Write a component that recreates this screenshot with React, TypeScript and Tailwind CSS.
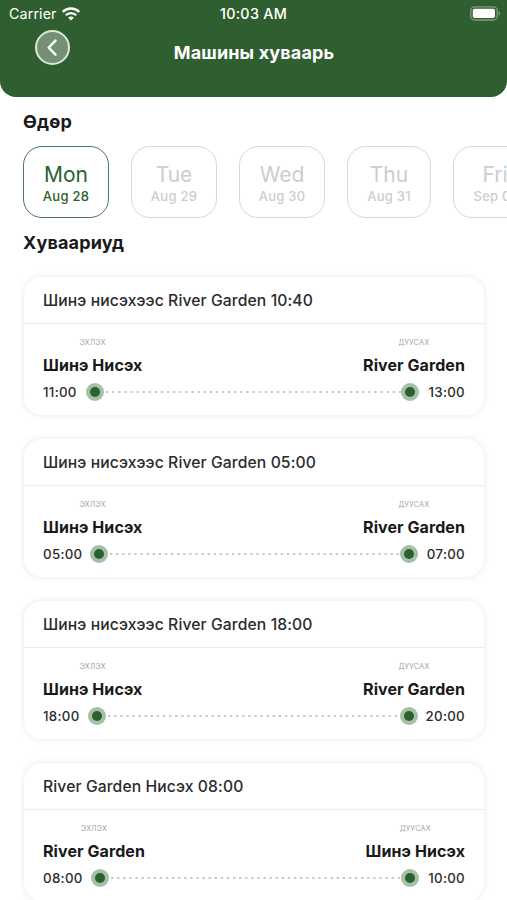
import React from 'react';
import clsx from 'clsx';

interface Day {
  name: string;
  date: string;
  width: string;
}

interface Trip {
  title: string;
  from: string;
  to: string;
  start: string;
  end: string;
  // text widths of the start/end times
  startWidth: string;
  endWidth: string;
}

const days: Day[] = [
  { name: 'Mon', date: 'Aug 28', width: 'w-[86px]' },
  { name: 'Tue', date: 'Aug 29', width: 'w-[86px]' },
  { name: 'Wed', date: 'Aug 30', width: 'w-[86px]' },
  { name: 'Thu', date: 'Aug 31', width: 'w-[84px]' },
  { name: 'Fri', date: 'Sep 01', width: 'w-[84px]' },
];

const trips: Trip[] = [
  { title: 'Шинэ нисэхээс River Garden 10:40', from: 'Шинэ Нисэх', to: 'River Garden', start: '11:00', end: '13:00', startWidth: 'w-[43px]', endWidth: 'w-[46px]' },
  { title: 'Шинэ нисэхээс River Garden 05:00', from: 'Шинэ Нисэх', to: 'River Garden', start: '05:00', end: '07:00', startWidth: 'w-[47px]', endWidth: 'w-[47px]' },
  { title: 'Шинэ нисэхээс River Garden 18:00', from: 'Шинэ Нисэх', to: 'River Garden', start: '18:00', end: '20:00', startWidth: 'w-[45px]', endWidth: 'w-[47px]' },
  { title: 'River Garden Нисэх 08:00', from: 'River Garden', to: 'Шинэ Нисэх', start: '08:00', end: '10:00', startWidth: 'w-[48px]', endWidth: 'w-[46px]' },
];

function WifiIcon() {
  return (
    <svg width="18" height="14" viewBox="0 0 18 14" fill="none" stroke="white">
      <path d="M0.8 5C5.3 0.4 12.7 0.4 17.2 5" strokeWidth="2.5" />
      <path d="M3.8 8.2C6.7 5.3 11.3 5.3 14.2 8.2" strokeWidth="2.3" />
      <path d="M9 13.6L6.2 10.7C7.8 9.2 10.2 9.2 11.8 10.7Z" fill="white" stroke="none" />
    </svg>
  );
}

function BatteryIcon() {
  return (
    <svg width="31" height="15" viewBox="0 0 31 15" fill="none">
      <rect x="0.8" y="0.8" width="26.4" height="13.2" rx="3.8" stroke="#7d9f7e" strokeWidth="1.3" />
      <rect x="2.8" y="2.8" width="22.2" height="9.2" rx="1.8" fill="white" />
      <path d="M28.6 5.2C30.6 5.9 30.6 8.9 28.6 9.6Z" fill="#7d9f7e" />
    </svg>
  );
}

function Header() {
  return (
    <header className="h-[97px] rounded-b-[16px] bg-[#2f5f30] text-white">
      <div className="grid h-[27px] grid-cols-3 items-center">
        <div className="flex items-center gap-[5px] pl-[9px] text-[14.3px]">
          <span className="tracking-[0.1px]">Carrier</span>
          <WifiIcon />
        </div>
        <span className="text-center text-[14.3px] font-medium tracking-[0.3px]">10:03 AM</span>
        <div className="flex justify-end pr-[6px]">
          <BatteryIcon />
        </div>
      </div>
      <div className="grid grid-cols-[71px_1fr_70px]">
        <button className="mt-[3px] ml-[35px] flex size-[35px] items-center justify-center rounded-full border-2 border-[#dce6dc] bg-[#748f74]">
          <svg width="12" height="18" viewBox="0 0 12 18" fill="none" stroke="white" strokeWidth="2.4" strokeLinecap="round" strokeLinejoin="round">
            <path d="M8.5 1.6L1.7 8.6L8.5 15.6" />
          </svg>
        </button>
        <h1 className="mt-[13px] text-center text-[18px] leading-[26px] font-bold tracking-[0.15px]">Машины хуваарь</h1>
      </div>
    </header>
  );
}

function DayCard({ day, active }: { day: Day; active: boolean }) {
  return (
    <button
      className={clsx(
        'flex h-[72px] shrink-0 flex-col items-center rounded-[19px] border pt-[15px]',
        day.width,
        active ? 'border-[#4d774e] text-[#2a622d]' : 'border-[#d8d8d8] text-[#cdcdcd]',
      )}
    >
      <span className="text-[21px] leading-[26px]">{day.name}</span>
      <span className="text-[13px] leading-[17px] font-medium tracking-[0.25px]">{day.date}</span>
    </button>
  );
}

function Stop() {
  return (
    <span className="flex size-[18px] shrink-0 items-center justify-center rounded-full bg-[#a5c0a7]">
      <span className="size-[10px] rounded-full bg-[#2b612e]" />
    </span>
  );
}

function TripCard({ trip }: { trip: Trip }) {
  return (
    <article className="h-[138px] shrink-0 rounded-[18px] bg-white text-[#2b2b2d] shadow-[0_0_6px_1px_rgba(0,0,0,0.08)]">
      <h3 className="h-[47px] border-b border-[#ededed] pl-[19px] text-[15.7px] leading-[47px] font-medium tracking-[0.1px]">{trip.title}</h3>
      <div className="px-[19px] pt-[13px]">
        <div className="flex justify-between">
          <div className="flex flex-col items-center">
            <span className="text-[7px] leading-[12px] tracking-[0.3px] text-[#a0a0a0]">ЭХЛЭХ</span>
            <span className="mt-[4px] text-[16px] leading-[24px] font-bold tracking-[0.08px] text-[#19191b]">{trip.from}</span>
          </div>
          <div className="flex flex-col items-center">
            <span className="text-[7px] leading-[12px] tracking-[0.4px] text-[#a0a0a0]">ДУУСАХ</span>
            <span className="mt-[4px] text-[16px] leading-[24px] font-bold tracking-[0.08px] text-[#19191b]">{trip.to}</span>
          </div>
        </div>
        <div className="mt-[5px] flex h-[20px] items-center text-[13.3px] font-medium tracking-[0.3px]">
          <span className={clsx('pt-px', trip.startWidth)}>{trip.start}</span>
          <Stop />
          <svg className="h-[2px] min-w-0 flex-1">
            <line x1="2" y1="1" x2="100%" y2="1" stroke="#c3cbc3" strokeWidth="2" strokeDasharray="2.3 3.8" />
          </svg>
          <Stop />
          <span className={clsx('pt-px text-right', trip.endWidth)}>{trip.end}</span>
        </div>
      </div>
    </article>
  );
}

export default function App() {
  return (
    <div className="flex h-[900px] w-[507px] flex-col overflow-hidden bg-white font-['Inter','Liberation_Sans',sans-serif]">
      <Header />
      <h2 className="mt-[13px] pl-[23px] text-[18px] leading-[24px] font-bold tracking-[0.15px] text-[#19191b]">Өдөр</h2>
      <div className="mt-[12px] flex shrink-0 gap-[22px] overflow-hidden pl-[23px]">
        {days.map((day, index) => (
          <DayCard key={day.date} day={day} active={index === 0} />
        ))}
      </div>
      <h2 className="mt-[13px] pl-[23px] text-[18px] leading-[24px] font-bold tracking-[0.15px] text-[#19191b]">Хуваариуд</h2>
      <main className="flex min-h-0 flex-1 flex-col gap-6 overflow-hidden px-6 pt-[22px] pr-[23px]">
        {trips.map((trip) => (
          <TripCard key={trip.title} trip={trip} />
        ))}
      </main>
    </div>
  );
}
